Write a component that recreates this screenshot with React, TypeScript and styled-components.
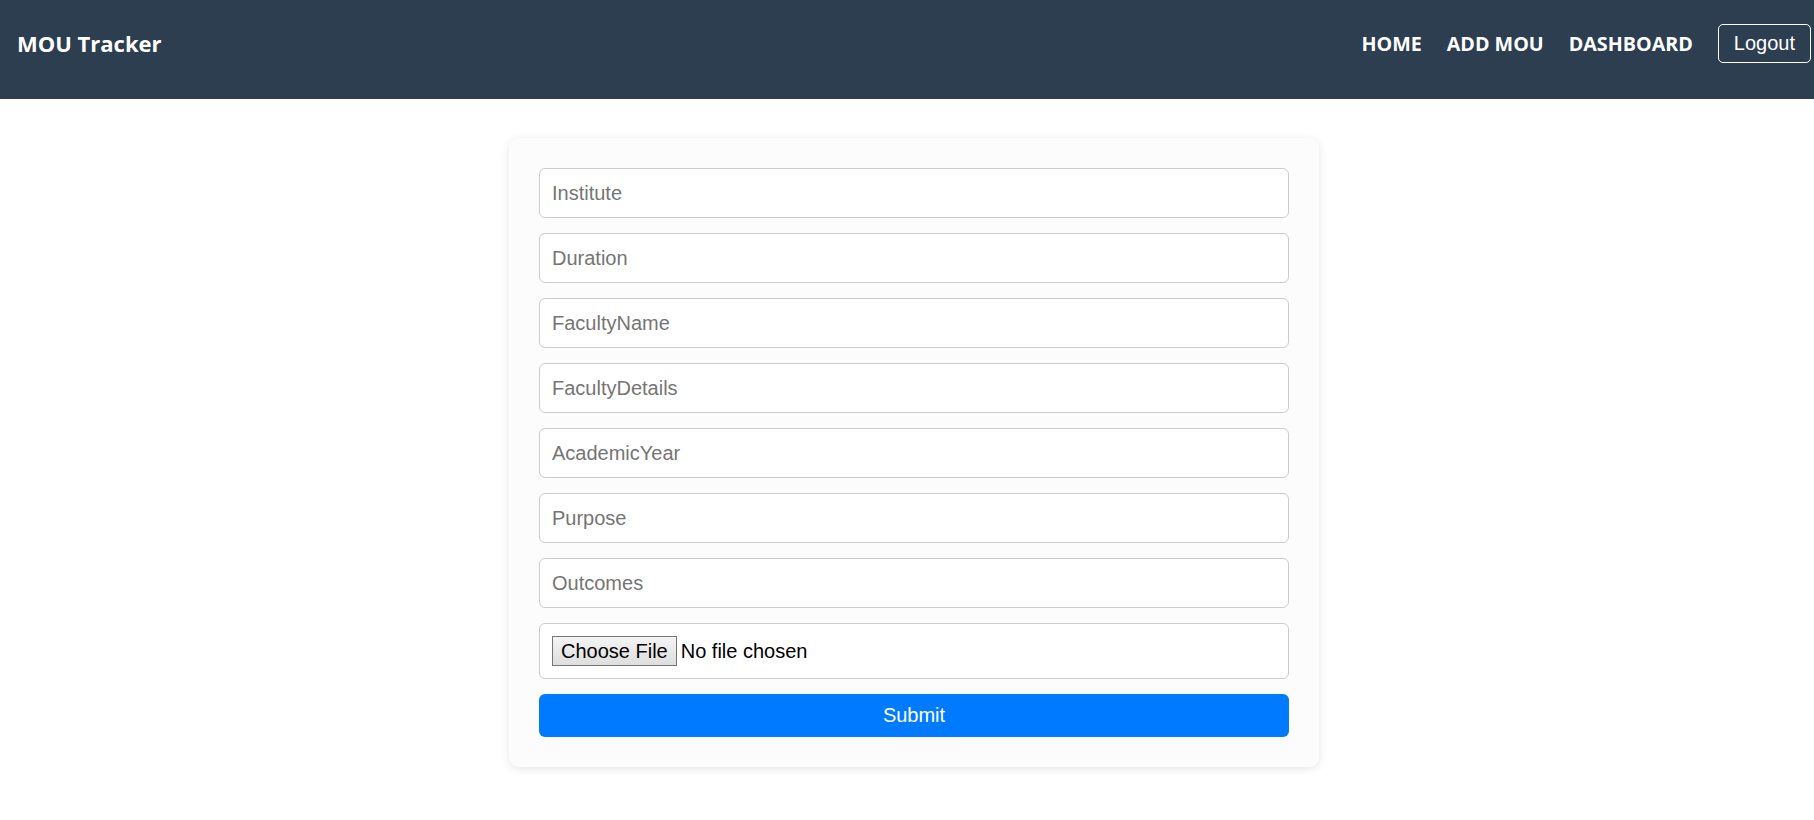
import React from "react";
import styled, { createGlobalStyle } from "styled-components";

const fields = [
  "Institute",
  "Duration",
  "FacultyName",
  "FacultyDetails",
  "AcademicYear",
  "Purpose",
  "Outcomes",
];

const GlobalStyle = createGlobalStyle`
  body {
    margin: 0;
    background: #fff;
    font-family: "Liberation Sans", Arial, sans-serif;
  }
`;

const App: React.FC = () => {
  return (
    <>
      <GlobalStyle />
      <Navbar>
        <Brand>MOU Tracker</Brand>
        <NavLinks>
          <NavLink>HOME</NavLink>
          <NavLink>ADD MOU</NavLink>
          <NavLink>DASHBOARD</NavLink>
          <LogoutButton>Logout</LogoutButton>
        </NavLinks>
      </Navbar>
      <Main>
        <FormCard onSubmit={(e) => e.preventDefault()}>
          {fields.map((f) => (
            <TextInput key={f} type="text" placeholder={f} />
          ))}
          <FileInput type="file" />
          <SubmitButton type="submit">Submit</SubmitButton>
        </FormCard>
      </Main>
    </>
  );
};

const Navbar = styled.header`
  display: flex;
  align-items: center;
  justify-content: space-between;
  box-sizing: border-box;
  height: 99px;
  padding: 0 3px 13px 17px;
  background: #2c3e50;
  color: #fff;
`;

const Brand = styled.div`
  font-family: "Open Sans", sans-serif;
  font-weight: 700;
  font-size: 22px;
`;

const NavLinks = styled.nav`
  display: flex;
  align-items: center;
  gap: 25px;
`;

const NavLink = styled.a`
  font-family: "Open Sans", sans-serif;
  font-weight: 700;
  font-size: 19.7px;
  color: #fff;
  cursor: pointer;
`;

const LogoutButton = styled.button`
  box-sizing: border-box;
  height: 39px;
  padding: 0 15px;
  background: transparent;
  color: #fff;
  border: 1px solid #fff;
  border-radius: 5px;
  font-family: "Liberation Sans", Arial, sans-serif;
  font-size: 20px;
  cursor: pointer;
`;

const Main = styled.main`
  display: flex;
  justify-content: center;
  padding: 39px 0 40px 14px;
`;

const FormCard = styled.form`
  display: flex;
  flex-direction: column;
  gap: 15px;
  box-sizing: border-box;
  width: 810px;
  padding: 30px;
  background: #fcfcfc;
  border-radius: 10px;
  box-shadow: 0 2px 10px rgba(0, 0, 0, 0.1);
`;

const TextInput = styled.input`
  box-sizing: border-box;
  height: 50px;
  padding: 0 12px;
  border: 1px solid #ccc;
  border-radius: 6px;
  background: #fff;
  font-family: "Liberation Sans", Arial, sans-serif;
  font-size: 20px;
  color: #222;
  outline: none;

  &::placeholder {
    color: #757575;
  }
`;

const FileInput = styled(TextInput)`
  height: 56px;
  padding: 12px;
  color: #000;

  &::file-selector-button {
    height: 30px;
    margin-right: 4px;
    padding: 0 8px;
    font-family: "Liberation Sans", Arial, sans-serif;
    font-size: 20px;
    color: #000;
    background: linear-gradient(#f4f4f4, #dedede);
    border: 1px solid #767676;
    border-radius: 0;
  }
`;

const SubmitButton = styled.button`
  height: 43px;
  border: none;
  border-radius: 6px;
  background: #007bff;
  color: #fff;
  font-family: "Liberation Sans", Arial, sans-serif;
  font-size: 20px;
  cursor: pointer;
`;

export default App;
